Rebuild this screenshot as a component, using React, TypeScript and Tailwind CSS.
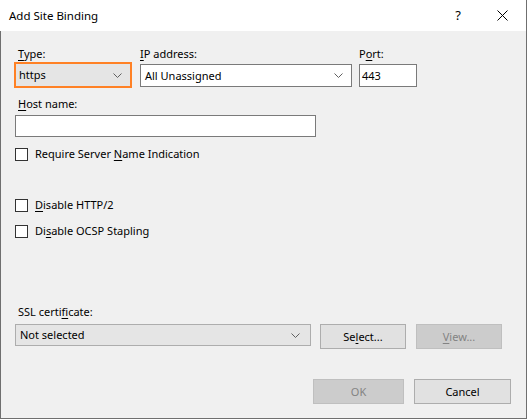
import { ReactNode } from 'react'

const Chevron = () => (
  <svg width="9" height="5" viewBox="0 0 9 5" className="shrink-0">
    <polyline points="0.5,0.5 4.5,4.5 8.5,0.5" fill="none" stroke="#606060" strokeWidth="1" />
  </svg>
)

const Key = ({ children }: { children: ReactNode }) => (
  <span className="underline underline-offset-[2px] decoration-1">{children}</span>
)

const CheckRow = ({ className, children }: { className: string, children: ReactNode }) => (
  <div className={`${className} flex items-center h-[16px] ml-[14px]`}>
    <div className="w-[13px] h-[13px] border border-[#333333] bg-white shrink-0" />
    <span className="ml-[7px]">{children}</span>
  </div>
)

export default function App() {
  return (
    <div className="w-[527px] h-[419px] flex flex-col text-[11px] leading-[16px] text-black" style={{ fontFamily: '"Noto Sans", "Open Sans", sans-serif' }}>
      {/* title bar */}
      <div className="h-[31px] bg-white flex items-center border-r border-[#6f6f6f] shrink-0">
        <span className="ml-[9px] text-[11.5px]">Add Site Binding</span>
        <span className="ml-auto mr-[36px] text-[13px] leading-none">?</span>
        <svg width="11" height="11" viewBox="0 0 11 11" className="mr-[18px]">
          <path d="M0.5 0.5 L10.5 10.5 M10.5 0.5 L0.5 10.5" stroke="#000" strokeWidth="1" />
        </svg>
      </div>

      {/* body */}
      <div className="flex-1 bg-[#f0f0f0] border-l border-r border-b border-[#6f6f6f] flex flex-col">
        <div className="flex mt-[15px]">
          <div className="ml-[13px] w-[118px] flex flex-col">
            <span className="pl-[4px]"><Key>T</Key>ype:</span>
            <div className="h-[26px] border-2 border-[#ff8125] bg-[#e5e5e5] flex items-center pl-[3px] pr-[8px]">
              <span className="flex-1">https</span>
              <Chevron />
            </div>
          </div>
          <div className="ml-[8px] w-[212px] flex flex-col">
            <span><Key>I</Key>P address:</span>
            <div className="mt-[2px] h-[23px] border border-[#7a7a7a] bg-white flex items-center pl-[4px] pr-[8px]">
              <span className="flex-1">All Unassigned</span>
              <Chevron />
            </div>
          </div>
          <div className="ml-[7px] w-[58px] flex flex-col">
            <span>P<Key>o</Key>rt:</span>
            <div className="mt-[2px] h-[23px] border border-[#7a7a7a] bg-white flex items-center pl-[2px]">
              443
            </div>
          </div>
        </div>

        <span className="mt-[8px] ml-[17px]"><Key>H</Key>ost name:</span>
        <div className="mt-[3px] ml-[14px] w-[301px] h-[22px] border border-[#7a7a7a] bg-white" />

        <CheckRow className="mt-[9px]">Require Server <Key>N</Key>ame Indication</CheckRow>
        <CheckRow className="mt-[35px]"><Key>D</Key>isable HTTP/2</CheckRow>
        <CheckRow className="mt-[10px]">Di<Key>s</Key>able OCSP Stapling</CheckRow>

        <span className="mt-[65px] ml-[17px]">SSL certi<Key>f</Key>icate:</span>
        <div className="mt-[4px] flex items-start">
          <div className="ml-[14px] w-[296px] h-[22px] border border-[#adadad] bg-[#e5e5e5] flex items-center pl-[4px] pr-[10px]">
            <span className="flex-1">Not selected</span>
            <Chevron />
          </div>
          <div className="ml-[9px] w-[86px] h-[25px] border border-[#adadad] bg-[#e1e1e1] flex items-center justify-center">
            Se<Key>l</Key>ect...
          </div>
          <div className="ml-[10px] w-[86px] h-[25px] border border-[#bfbfbf] bg-[#cccccc] text-[#838383] flex items-center justify-center">
            <Key>V</Key>iew...
          </div>
        </div>

        <div className="mt-[30px] flex">
          <div className="ml-[312px] w-[91px] h-[25px] border border-[#bfbfbf] bg-[#cccccc] text-[#838383] flex items-center justify-center">
            OK
          </div>
          <div className="ml-[10px] w-[97px] h-[25px] border border-[#adadad] bg-[#e1e1e1] flex items-center justify-center">
            Cancel
          </div>
        </div>
      </div>
    </div>
  )
}
